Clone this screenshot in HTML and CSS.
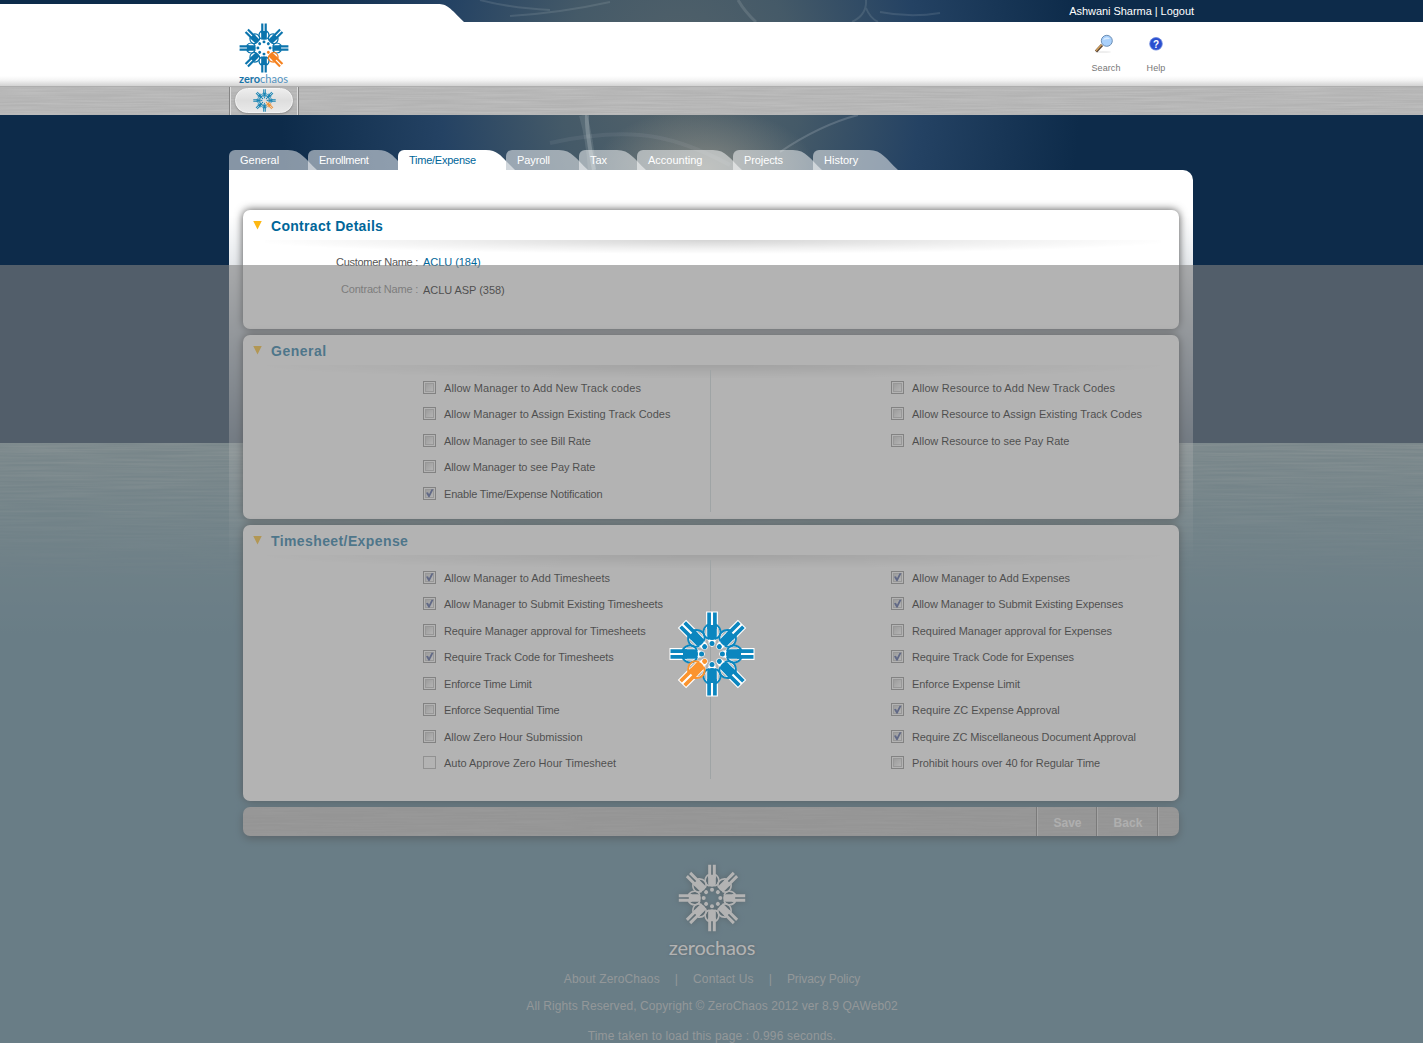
FILE: index.html
```html
<!DOCTYPE html>
<html lang="en">
<head>
<meta charset="utf-8">
<title>ZeroChaos - Contract Details</title>
<link rel="stylesheet" href="styles.css">
</head>
<body>
<svg class="defs" width="0" height="0">
  <defs>
    <g id="person">
      <path d="M-2.9 -41.5V-25M2.9 -41.5V-25" stroke="currentColor" stroke-width="3.7" fill="none"/>
      <path d="M-4.8 -29V-18Q-4.8 -14 0 -14Q4.8 -14 4.8 -18V-29Z" fill="currentColor"/>
      <path d="M-4 -29.5C-10.5 -25 -9.8 -17 -3 -15M4 -29.5C10.5 -25 9.8 -17 3 -15" stroke="currentColor" stroke-width="2" fill="none"/>
      <circle cx="0" cy="-10.4" r="2.5" fill="currentColor"/>
    </g>
    <g id="ring7">
      <use href="#person"/><use href="#person" transform="rotate(45)"/><use href="#person" transform="rotate(90)"/>
      <use href="#person" transform="rotate(180)"/><use href="#person" transform="rotate(270)"/><use href="#person" transform="rotate(315)"/>
    </g>
    <g id="edge">
      <path d="M-5.9 -42.5H5.9V-29Q10.5 -24 8 -17L3.5 -13Q4 -8 0 -7Q-4 -8 -3.5 -13L-8 -17Q-10.5 -24 -5.9 -29Z" fill="#fff"/>
      <path d="M-6.8 -25Q-7.2 -20 -5.6 -18V-26ZM6.8 -25Q7.2 -20 5.6 -18V-26Z" fill="#b2b2b2"/>
    </g>
  </defs>
</svg>
<div class="page">
  <header>
    <div class="topbar">
      <svg class="topbar-tab" width="466" height="18" viewBox="0 0 466 18"><path d="M0 0H438C447 0 450 4 464 18H0Z" fill="#fff"/></svg>
      <div class="user">Ashwani Sharma | Logout</div>
    </div>
    <div class="masthead">
      <div class="brand">
        <svg width="50" height="50" viewBox="-42.5 -42.5 85 85"><g color="#0b74ad"><use href="#ring7"/><use href="#person" transform="rotate(225)"/></g><g color="#f58220"><use href="#person" transform="rotate(135)"/></g></svg>
        <div class="brand-name"><b>zero</b>chaos</div>
      </div>
      <div class="tools">
        <div class="tool">
          <svg width="20" height="20" viewBox="0 0 20 20"><ellipse cx="9" cy="18" rx="8" ry="1" fill="#eee"/><path d="M2 17.5L8 11" stroke="#5a4535" stroke-width="3"/><path d="M2 16.8L7.5 10.8" stroke="#d9a45c" stroke-width="1.3"/><circle cx="12.8" cy="6.8" r="5.5" fill="#a9d0fb" stroke="#6d8fb5" stroke-width="1"/><path d="M9 6A4 4 0 0 1 16 5Q12 5 9 6" fill="#d9ecff"/></svg>
          <span>Search</span>
        </div>
        <div class="tool">
          <svg width="20" height="20" viewBox="0 0 20 20"><circle cx="10" cy="9.8" r="6.3" fill="#2a4fd0" stroke="#6c88dd" stroke-width=".8"/><text x="10" y="13.5" text-anchor="middle" class="qmark">?</text></svg>
          <span>Help</span>
        </div>
      </div>
    </div>
    <div class="navbar metal">
      <div class="nav-cell"><div class="nav-pill">
        <svg width="25" height="23" viewBox="-46 -42.5 92 85"><g color="#1b86b5"><use href="#ring7"/><use href="#person" transform="rotate(225)"/></g><g color="#f0953c"><use href="#person" transform="rotate(135)"/></g></svg>
      </div></div>
    </div>
  </header>

  <main>
    <nav class="tabs">
      <div class="tab t1"><span>General</span><svg width="29" height="20"><path d="M0 0C13 0 17 9 29 20H0Z"/></svg></div>
      <div class="tab t2"><span>Enrollment</span><svg width="29" height="20"><path d="M0 0C11 0 15 6 20 11V20H0Z"/></svg></div>
      <div class="tab t3 active"><span>Time/Expense</span><svg width="29" height="20"><path d="M0 0C11 0 15 6 20 11V20H0Z"/><path d="M20 11L29 20H20Z" fill-opacity=".55"/></svg></div>
      <div class="tab t4"><span>Payroll</span><svg width="29" height="20"><path d="M0 0C13 0 17 9 29 20H0Z"/></svg></div>
      <div class="tab t5"><span>Tax</span><svg width="29" height="20"><path d="M0 0C13 0 17 9 29 20H0Z"/></svg></div>
      <div class="tab t6"><span>Accounting</span><svg width="29" height="20"><path d="M0 0C13 0 17 9 29 20H0Z"/></svg></div>
      <div class="tab t7"><span>Projects</span><svg width="29" height="20"><path d="M0 0C13 0 17 9 29 20H0Z"/></svg></div>
      <div class="tab t8"><span>History</span><svg width="29" height="20"><path d="M0 0C13 0 17 9 29 20H0Z"/></svg></div>
    </nav>
    <div class="panel">
      <section class="card contract">
        <h2><i class="arrow"></i><span>Contract Details</span></h2>
        <div class="rule"></div>
        <dl>
          <dt>Customer Name :</dt><dd class="link">ACLU (184)</dd>
          <dt class="muted">Contract Name :</dt><dd>ACLU ASP (358)</dd>
        </dl>
      </section>
      <section class="card general">
        <h2><i class="arrow"></i><span>General</span></h2>
        <div class="rule"></div>
        <div class="cols">
          <ul>
            <li class="wide"><i class="box"></i><span>Allow Manager to Add New Track codes</span></li>
            <li><i class="box"></i><span>Allow Manager to Assign Existing Track Codes</span></li>
            <li class="snug"><i class="box"></i><span>Allow Manager to see Bill Rate</span></li>
            <li class="snug"><i class="box"></i><span>Allow Manager to see Pay Rate</span></li>
            <li class="tight"><i class="box on"></i><span>Enable Time/Expense Notification</span></li>
          </ul>
          <ul>
            <li class="wide"><i class="box"></i><span>Allow Resource to Add New Track Codes</span></li>
            <li><i class="box"></i><span>Allow Resource to Assign Existing Track Codes</span></li>
            <li><i class="box"></i><span>Allow Resource to see Pay Rate</span></li>
          </ul>
        </div>
      </section>
      <section class="card timesheet">
        <h2><i class="arrow"></i><span>Timesheet/Expense</span></h2>
        <div class="rule"></div>
        <div class="cols">
          <ul>
            <li><i class="box on"></i><span>Allow Manager to Add Timesheets</span></li>
            <li class="snug"><i class="box on"></i><span>Allow Manager to Submit Existing Timesheets</span></li>
            <li class="snug"><i class="box"></i><span>Require Manager approval for Timesheets</span></li>
            <li class="snug"><i class="box on"></i><span>Require Track Code for Timesheets</span></li>
            <li class="tight"><i class="box"></i><span>Enforce Time Limit</span></li>
            <li class="tight"><i class="box"></i><span>Enforce Sequential Time</span></li>
            <li><i class="box"></i><span>Allow Zero Hour Submission</span></li>
            <li><i class="box disabled"></i><span>Auto Approve Zero Hour Timesheet</span></li>
          </ul>
          <ul>
            <li><i class="box on"></i><span>Allow Manager to Add Expenses</span></li>
            <li class="snug"><i class="box on"></i><span>Allow Manager to Submit Existing Expenses</span></li>
            <li class="snug"><i class="box"></i><span>Required Manager approval for Expenses</span></li>
            <li class="snug"><i class="box on"></i><span>Require Track Code for Expenses</span></li>
            <li class="snug"><i class="box"></i><span>Enforce Expense Limit</span></li>
            <li><i class="box on"></i><span>Require ZC Expense Approval</span></li>
            <li class="snug"><i class="box on"></i><span>Require ZC Miscellaneous Document Approval</span></li>
            <li class="snug"><i class="box"></i><span>Prohibit hours over 40 for Regular Time</span></li>
          </ul>
        </div>
      </section>
      <div class="actions metal"><span class="action">Save</span><span class="action back">Back</span><span class="action-end"></span></div>
    </div>
  </main>

  <footer>
    <svg class="foot-mark" width="68" height="68" viewBox="-42.5 -42.5 85 85"><g color="#fff"><use href="#ring7"/><use href="#person" transform="rotate(225)"/><use href="#person" transform="rotate(135)"/></g></svg>
    <div class="foot-name">zerochaos</div>
    <div class="foot-links"><span>About ZeroChaos</span><span>|</span><span>Contact Us</span><span>|</span><span class="policy">Privacy Policy</span></div>
    <div class="foot-copy">All Rights Reserved, Copyright © ZeroChaos 2012 ver 8.9 QAWeb02</div>
    <div class="foot-time">Time taken to load this page : 0.996 seconds.</div>
  </footer>

  <div class="overlay"></div>
  <svg class="loader" width="86" height="86" viewBox="-43 -43 86 86">
    <use href="#edge"/><use href="#edge" transform="rotate(45)"/><use href="#edge" transform="rotate(90)"/><use href="#edge" transform="rotate(135)"/><use href="#edge" transform="rotate(180)"/><use href="#edge" transform="rotate(225)"/><use href="#edge" transform="rotate(270)"/><use href="#edge" transform="rotate(315)"/>
    <g color="#0b86bf"><use href="#ring7"/><use href="#person" transform="rotate(135)"/></g><g color="#fb942f"><use href="#person" transform="rotate(225)"/></g>
  </svg>
</div>
</body>
</html>
```
FILE: styles.css
```css
* { box-sizing: border-box; }
body { margin: 0; font: 11px/14px "Liberation Sans", Arial, sans-serif; color: #333; }
.defs { position: absolute; }
.page {
  position: relative; width: 1423px; height: 1043px; overflow: hidden;
  background:
    url("data:image/svg+xml,%3Csvg xmlns='http://www.w3.org/2000/svg' width='1423' height='140'%3E%3Cdefs%3E%3ClinearGradient id='g' x2='0' y2='1'%3E%3Cstop stop-color='%23fff'/%3E%3Cstop offset='1' stop-color='%23fff' stop-opacity='0'/%3E%3C/linearGradient%3E%3Cmask id='m'%3E%3Crect width='1423' height='140' fill='url(%23g)'/%3E%3C/mask%3E%3Cfilter id='f' x='0' y='0' width='100%25' height='100%25'%3E%3CfeTurbulence type='fractalNoise' baseFrequency='.01 .5' numOctaves='2'/%3E%3CfeColorMatrix values='0 0 0 0 .85 0 0 0 0 .9 0 0 0 0 .85 1 0 0 0 -.3'/%3E%3C/filter%3E%3C/defs%3E%3Cg mask='url(%23m)'%3E%3Crect width='1423' height='140' filter='url(%23f)' opacity='.5'/%3E%3C/g%3E%3C/svg%3E") 0 443px no-repeat,
    linear-gradient(#70919a, #5e8795 70px, #487990 190px, #467890) 0 443px / 100% 600px no-repeat,
    radial-gradient(ellipse 110px 60px at 705px 168px, rgba(165,160,145,.6), rgba(150,150,130,0)) no-repeat,
    radial-gradient(ellipse 400px 500px at 680px 90px, rgba(88,102,108,.95), rgba(76,96,108,.88) 30%, rgba(46,76,110,.7) 60%, rgba(13,43,74,0)) no-repeat,
    #0d2b4a;
}
.page::before {
  content: ""; position: absolute; left: 440px; top: 0; width: 560px; height: 170px;
  background: url("data:image/svg+xml,%3Csvg xmlns='http://www.w3.org/2000/svg' width='560' height='170' fill='none'%3E%3Cg stroke='%23d5dde0'%3E%3Cpath d='M147 115Q146 130 154 170' stroke-width='4' opacity='.25'/%3E%3Cpath d='M143 115Q150 140 152 170' stroke-width='8' opacity='.13'/%3E%3Cpath d='M110 143Q160 132 200 135T290 165' stroke-width='4' opacity='.08'/%3E%3Cpath d='M340 152Q380 125 418 115' stroke-width='2' opacity='.2'/%3E%3Cpath d='M40 0Q70 8 110 10M70 16Q120 13 170 2' stroke-width='2' opacity='.13'/%3E%3Cpath d='M298 0Q305 12 316 22' stroke-width='3' opacity='.15'/%3E%3Cpath d='M426 0Q427 15 412 22M426 8Q430 18 438 22M440 12Q470 18 500 13' stroke-width='2' opacity='.13'/%3E%3C/g%3E%3C/svg%3E");
}
header { position: relative; }
.metal {
  background: url("data:image/svg+xml,%3Csvg xmlns='http://www.w3.org/2000/svg' width='1423' height='29'%3E%3Cfilter id='f' x='0' y='0' width='100%25' height='100%25'%3E%3CfeTurbulence type='fractalNoise' baseFrequency='.015 .6' numOctaves='2'/%3E%3CfeColorMatrix values='0 0 0 0 1 0 0 0 0 1 0 0 0 0 1 1 0 0 0 -.3'/%3E%3C/filter%3E%3Crect width='1423' height='29' filter='url(%23f)' opacity='.28'/%3E%3C/svg%3E") #b3b3b3;
}
.topbar { height: 22px; position: relative; display: flex; justify-content: flex-end; padding: 4px 229px 0 0; }
.topbar-tab { position: absolute; left: 0; top: 4px; }
.user { color: #fff; line-height: 15px; letter-spacing: -.04px; }
.masthead { height: 64px; background: linear-gradient(#fff 54px, #f4f4f4 58px, #d2d2d2); display: flex; justify-content: space-between; padding: 1px 242px 0 238px; }
.brand { width: 51px; display: flex; flex-direction: column; align-items: center; }
.brand svg { flex: none; }
.brand-name { font: 11px/11px Lato, sans-serif; color: #5291bd; white-space: nowrap; }
.brand-name b { color: #1974a8; font-weight: 700; }
.tools { display: flex; }
.tool { width: 50px; display: flex; flex-direction: column; align-items: center; padding-top: 11px; color: #777; font-size: 9px; }
.tool svg { margin-right: 5px; }
.tool + .tool svg { margin-right: 0; }
.tool span { margin-top: 8px; line-height: 12px; letter-spacing: .1px; }
.qmark { font: bold 10px "Liberation Sans", sans-serif; fill: #fff; }
.navbar { height: 29px; padding-left: 229px; border-top: 1px solid #aeaeae; }
.nav-cell { width: 70px; height: 28px; border: solid #858585; border-width: 0 1px; padding: 1px 4px 0; box-shadow: inset 1px 0 #ddd, inset -1px 0 #ddd; }
.nav-pill { width: 58px; height: 25px; margin-left: 1px; border-radius: 13px; background: linear-gradient(#ededed, #dedede 50%, #e9e9e9); border: 1px solid #f4f4f4; box-shadow: 0 1px 2px #888; display: flex; align-items: center; justify-content: center; }
main { width: 964px; margin: 35px 0 0 229px; position: relative; }
.tabs { display: flex; height: 20px; }
.tab { display: flex; color: #fff; margin-right: -9px; flex: none; }
.tab span { flex: 1; height: 20px; padding: 0 0 0 11px; line-height: 20px; background: rgba(255,255,255,.5); border-top-left-radius: 6px; white-space: nowrap; width: 0; }
.tab svg { fill: rgba(255,255,255,.5); flex: none; }
.tab.active { color: #006699; }
.tab.active span { background: #fff; }
.tab.active svg { fill: #fff; }
.t1 { width: 88px; } .t2 { width: 99px; letter-spacing: -.3px; } .t3 { width: 117px; letter-spacing: -.25px; } .t4 { width: 82px; letter-spacing: -.1px; }
.t5 { width: 67px; } .t6 { width: 105px; } .t7 { width: 89px; letter-spacing: -.1px; } .t8 { width: 85px; }
.panel { padding: 40px 14px 0; border-radius: 0 10px 0 0; background: linear-gradient(#fff 45px, rgba(255,255,255,.9) 90px, rgba(255,255,255,.38) 260px, rgba(255,255,255,0) 390px); display: flex; flex-direction: column; gap: 6px; }
.card { background: #fff; border-radius: 7px; box-shadow: 0 0 9px rgba(0,0,0,.7); flex: none; }
.contract { height: 119px; } .general { height: 184px; } .timesheet { height: 276px; }
h2 { margin: 0; height: 30px; display: flex; align-items: center; padding: 2px 0 0 10px; font-size: 14px; line-height: 20px; color: #006699; letter-spacing: .3px; }
.general h2 { letter-spacing: .5px; }
.timesheet h2 { letter-spacing: .4px; }
.arrow { width: 9px; height: 9px; background: #fdb813; clip-path: polygon(0 0, 100% 0, 50% 100%); margin: -2px 9px 0 0; }
.rule { height: 14px; margin: 0 18px 0 22px; background: radial-gradient(ellipse 52% 100% at 50% 0, rgba(0,0,0,.17), rgba(0,0,0,.06) 60%, transparent); }
dl { margin: 1px 0 0; display: grid; grid-template-columns: 175px 1fr; column-gap: 5px; grid-auto-rows: 28px; line-height: 14px; }
dt { text-align: right; letter-spacing: -.28px; }
dd { margin: 0; letter-spacing: -.05px; color: #000; }
dt, .muted { color: #555; }
.muted { color: #777; margin-top: -1px; letter-spacing: -.21px; }
dd.link { color: #006699; }
.cols { display: grid; grid-template-columns: 468px 468px; margin-top: -9px; }
ul { list-style: none; margin: 0; padding: 5px 0 0 180px; }
ul:first-child { border-right: 1px solid #cdd9db; }
.general ul { height: 142px; } .timesheet ul { height: 219px; }
li { height: 26.5px; display: flex; align-items: center; padding-bottom: 1px; letter-spacing: -.01px; color: #000; white-space: nowrap; }
.wide { letter-spacing: .07px; }
.snug { letter-spacing: -.1px; }
.tight { letter-spacing: -.19px; }
.box { width: 13px; height: 13px; border: 1px solid #858585; background: linear-gradient(135deg, #c8c8c8, #fff) content-box; padding: 2px; margin: -1px 8px 0 0; position: relative; flex: none; outline: 1px solid #bbb; outline-offset: -3px; }
.box.on::after { content: ""; position: absolute; inset: 0; background: #34488f; clip-path: polygon(2px 5px, 4px 4.5px, 5px 6.5px, 7.5px 1.5px, 9.5px 1.5px, 5.5px 9.5px, 4.5px 9.5px); }
.box.disabled { border-color: #aaa; background: #fff; outline: 0; }
.actions { height: 29px; border-radius: 7px; box-shadow: 0 3px 9px rgba(0,0,0,.5); display: flex; justify-content: flex-end; }
.action { width: 60px; padding-left: 2px; text-align: center; font-size: 12px; font-weight: 700; line-height: 32px; color: #f4f4f4; border-left: 1px solid #707070; box-shadow: inset 1px 0 #ddd; }
.action.back { width: 61px; letter-spacing: .1px; }
.action-end { width: 22px; border-left: 1px solid #707070; box-shadow: inset 1px 0 #ddd; }
footer { width: 964px; margin: 28px 0 0 230px; display: flex; flex-direction: column; align-items: center; color: #b0babd; font-size: 12px; }
.foot-mark { filter: drop-shadow(0 0 3px rgba(0,0,0,.5)); }
.foot-name { font: 20px/24px Lato, sans-serif; color: #fff; margin-top: 3px; letter-spacing: -.2px; text-shadow: 0 0 3px rgba(0,0,0,.5); }
.foot-links { display: flex; gap: 15px; line-height: 14px; margin-top: 13px; letter-spacing: .13px; }
.policy { letter-spacing: -.1px; }
.foot-copy { margin-top: 13px; letter-spacing: .08px; }
.foot-time { margin-top: 16px; white-space: nowrap; letter-spacing: .15px; }
.overlay { position: absolute; left: 0; top: 265px; right: 0; bottom: 0; background: rgba(128,128,128,.6); }
.loader { position: absolute; left: 669px; top: 611px; }
```
